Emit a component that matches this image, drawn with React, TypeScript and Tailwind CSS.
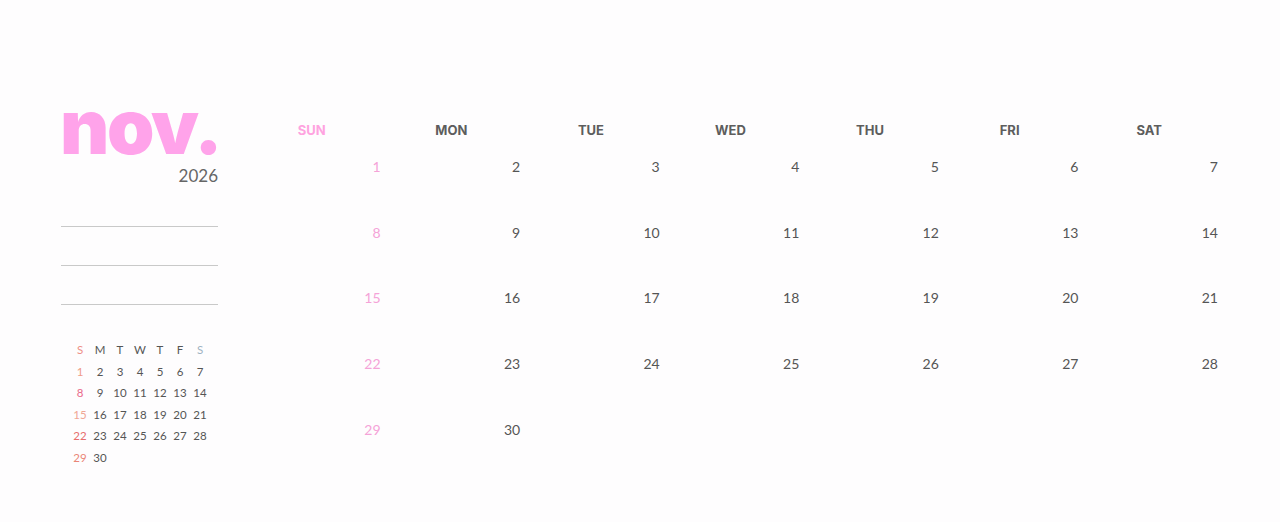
import React from "react";

const days = ["SUN", "MON", "TUE", "WED", "THU", "FRI", "SAT"];
const miniHead = ["S", "M", "T", "W", "T", "F", "S"];

// november 2026 starts on a sunday
const weeks: (number | null)[][] = [
	[1, 2, 3, 4, 5, 6, 7],
	[8, 9, 10, 11, 12, 13, 14],
	[15, 16, 17, 18, 19, 20, 21],
	[22, 23, 24, 25, 26, 27, 28],
	[29, 30, null, null, null, null, null],
];

const sundayColors = ["text-[#ef9b86]", "text-[#e9698a]", "text-[#f0a795]", "text-[#e76d6d]", "text-[#ea8577]"];

const MiniCalendar = () => {
	return (
		<div className="ml-[9px] mt-[34px] w-[140px] text-[11.5px] leading-[21.5px] font-['Lato',sans-serif]">
			<div className="grid grid-cols-7 text-center">
				{miniHead.map((d, i) => (
					<div
						key={i}
						className={i === 0 ? "text-[#ee8f88]" : i === 6 ? "text-[#9fb3c3]" : "text-[#555]"}
					>
						{d}
					</div>
				))}
			</div>
			{weeks.map((w, wi) => (
				<div key={wi} className="grid grid-cols-7 text-center">
					{w.map((n, i) => (
						<div key={i} className={i === 0 ? sundayColors[wi] : "text-[#555]"}>
							{n ?? ""}
						</div>
					))}
				</div>
			))}
		</div>
	);
};

export default function App() {
	return (
		<div className="w-[1280px] h-[522px] bg-[#fefdfe] flex pl-[61px] pt-[96px] overflow-hidden">
			<aside className="w-[157px] flex-shrink-0 flex flex-col">
				<h1 className="font-['Inter',sans-serif] font-black text-[76px] leading-[76px] tracking-[-0.03em] text-[#ffa3ea] ml-[-1px] mt-[-8px]">
					nov.
				</h1>
				<div className="text-right text-[17px] leading-[16px] text-[#666] font-['Lato',sans-serif] mt-[4px]">
					2026
				</div>
				<div className="mt-[42px] flex flex-col gap-[38px]">
					<div className="h-px bg-[#c9c9c9]" />
					<div className="h-px bg-[#c9c9c9]" />
					<div className="h-px bg-[#c9c9c9]" />
				</div>
				<MiniCalendar />
			</aside>

			<main className="ml-[24px] w-[977px] mt-[24px]">
				<div className="grid grid-cols-7 h-[20px]">
					{days.map((d, i) => (
						<div
							key={d}
							className={
								"text-center text-[13px] leading-[20px] font-bold font-['Inter',sans-serif] " +
								(i === 0 ? "text-[#ffa3e0]" : "text-[#5d5d5d]")
							}
						>
							{d}
						</div>
					))}
				</div>
				<div className="mt-[19px]">
					{weeks.map((w, wi) => (
						<div key={wi} className="grid grid-cols-7 h-[65.7px]">
							{w.map((n, i) => (
								<div
									key={i}
									className={
										"text-right pr-[1px] text-[14px] leading-[16px] font-['Lato',sans-serif] " +
										(i === 0 ? "text-[#f5a3d8]" : "text-[#555]")
									}
								>
									{n ?? ""}
								</div>
							))}
						</div>
					))}
				</div>
			</main>
		</div>
	);
}
